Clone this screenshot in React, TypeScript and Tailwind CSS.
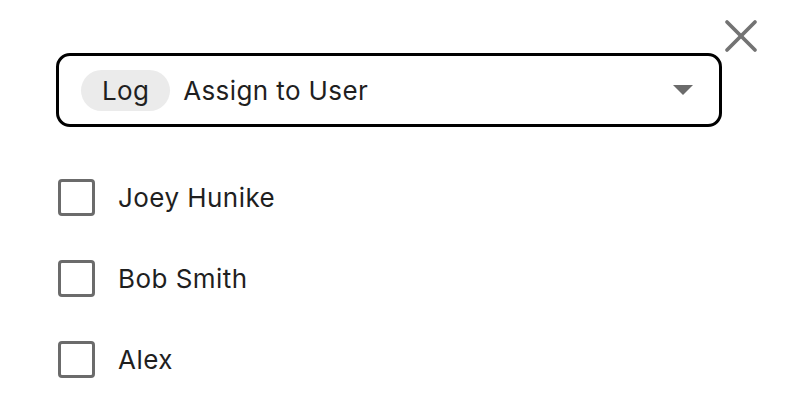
import { X } from "lucide-react";

const users = ["Joey Hunike", "Bob Smith", "Alex"];

export default function App() {
  return (
    <div
      className="relative w-[788px] h-[398px] bg-white text-[#1f1f1f]"
      style={{ fontFamily: "Inter, 'Liberation Sans', sans-serif" }}
    >
      <button className="absolute left-[713px] top-[8px] text-[#737373]">
        <X size={56} strokeWidth={1.6} />
      </button>

      <div className="pt-[53px] pl-[56px]">
        <div className="w-[666px] h-[74px] border-[3px] border-black rounded-[14px] flex items-center pl-[22px] pr-[26px]">
          <span className="h-[41px] px-[21px] rounded-full bg-[#ebebeb] flex items-center text-[26px] tracking-[0.3px]">
            Log
          </span>
          <span className="ml-[13px] text-[26px] tracking-[0.4px]">Assign to User</span>
          <svg className="ml-auto" width="20" height="10" viewBox="0 0 20 10">
            <path d="M0 0 L20 0 L10 10 Z" fill="#6b6b6b" />
          </svg>
        </div>

        <div className="mt-[52px] flex flex-col gap-[45px]">
          {users.map((u) => (
            <label key={u} className="flex items-center h-[36px]">
              <span className="ml-[2px] w-[37px] h-[37px] border-[3px] border-[#6b6b6b] rounded-[4px]" />
              <span className="ml-[23px] text-[26px] tracking-[0.45px]">{u}</span>
            </label>
          ))}
        </div>
      </div>
    </div>
  );
}
